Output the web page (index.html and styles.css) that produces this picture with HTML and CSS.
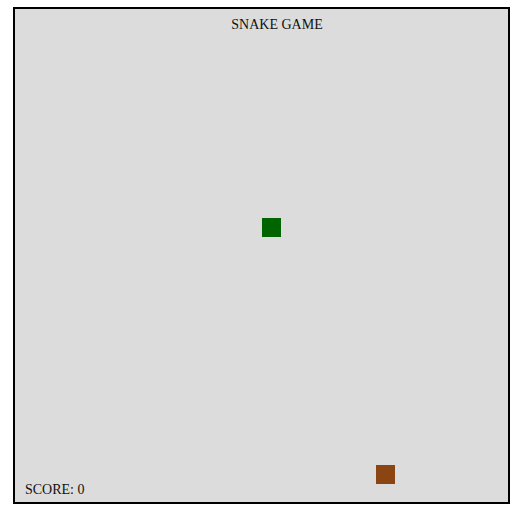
FILE: index.html
```html
<!DOCTYPE html>
<html lang="en">
<head>
    <meta charset="UTF-8">
    <meta name="viewport" content="width=device-width, initial-scale=1.0">
    <title>Snake Game</title>
    <link rel="stylesheet" href="styles.css">
</head>
<body>
    <div class="board">
        <div class="title">SNAKE GAME</div>
        <div class="cell snake" style="left: 247px; top: 209px;"></div>
        <div class="cell food" style="left: 361px; top: 456px;"></div>
        <div class="score">SCORE: 0</div>
    </div>
</body>
</html>
```

FILE: styles.css
```css
body {
    margin: 0;
    background-color: white;
    font-family: "Liberation Serif", "Times New Roman", serif;
    font-size: 14px;
    color: #111;
}
.board {
    position: relative;
    box-sizing: border-box;
    width: 497px;
    height: 497px;
    margin: 7px 0 0 13px;
    border: 2px solid black;
    background-color: gainsboro;
    display: flex;
    flex-direction: column;
    justify-content: space-between;
}
.title {
    padding: 8px 0 0 31px;
    text-align: center;
}
.score {
    padding: 0 0 4px 10px;
}
.cell {
    position: absolute;
    width: 19px;
    height: 19px;
}
.snake {
    background-color: darkgreen;
}
.food {
    background-color: saddlebrown;
}
```
